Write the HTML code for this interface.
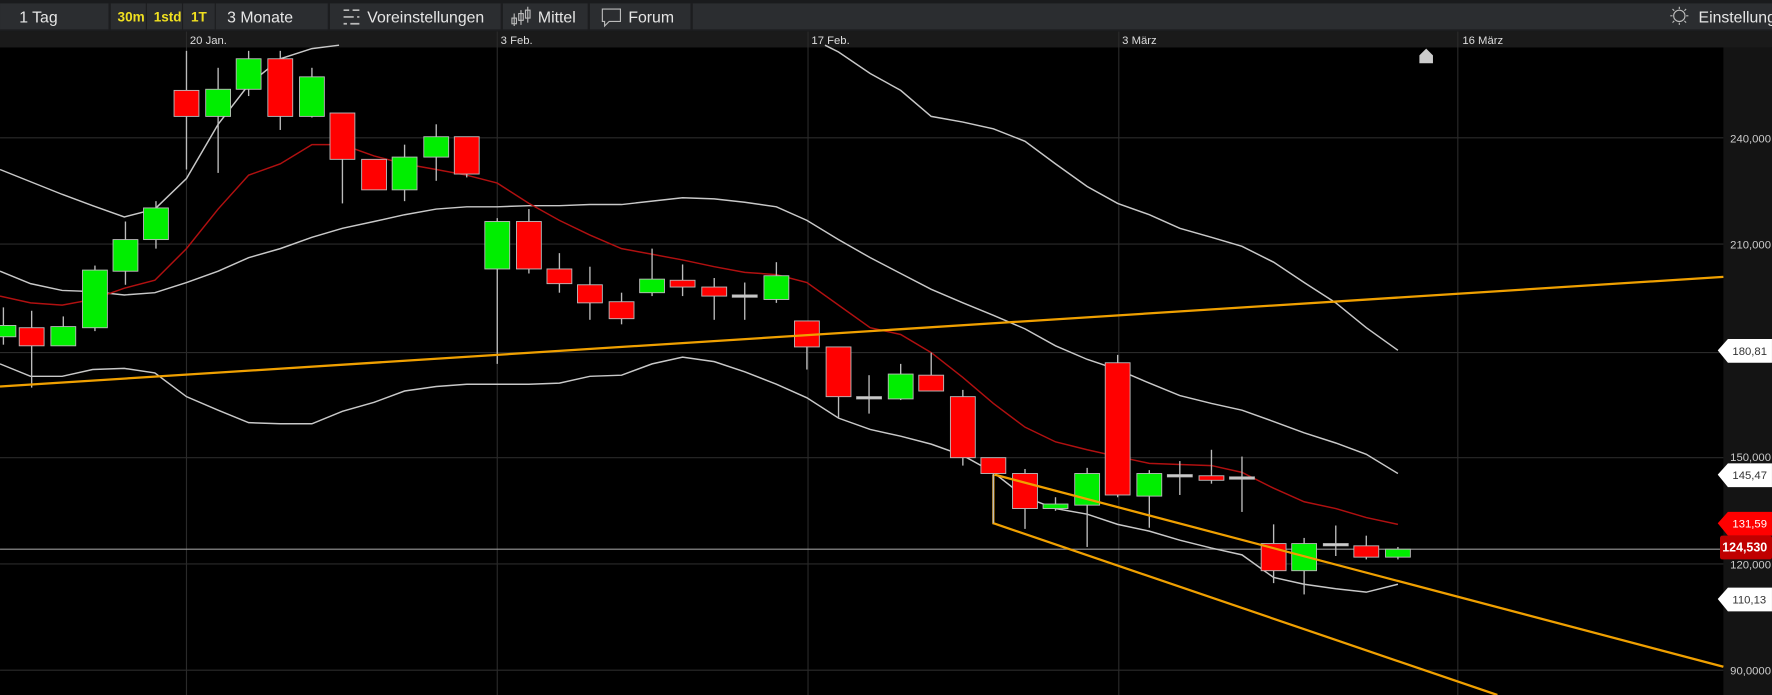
<!DOCTYPE html>
<html><head><meta charset="utf-8">
<style>
html,body{margin:0;padding:0;background:#000;overflow:hidden}
svg{display:block}
text{font-family:"Liberation Sans",sans-serif}
</style></head>
<body>
<svg id="s" width="1772" height="695" viewBox="0 0 1568 615" xmlns="http://www.w3.org/2000/svg">
<rect width="1568" height="615" fill="#000"/>
<rect x="0" y="0" width="1568" height="28" fill="#2b2d30"/>
<rect x="0" y="0" width="1568" height="3" fill="#1a1b1d"/>
<rect x="0" y="26" width="1568" height="2" fill="#1c1d1f"/>
<g fill="#1c1d1f">
<rect x="96" y="3" width="2" height="24"/><rect x="129" y="3" width="1" height="24"/><rect x="161" y="3" width="1" height="24"/>
<rect x="190" y="3" width="1" height="24"/><rect x="290" y="3" width="2" height="24"/><rect x="443" y="3" width="2" height="24"/>
<rect x="520" y="3" width="2" height="24"/><rect x="611" y="3" width="2" height="24"/>
</g>
<g font-size="14" fill="#e6e6e6">
<text x="17" y="20">1 Tag</text>
<text x="201" y="20">3 Monate</text>
<text x="325" y="20">Voreinstellungen</text>
<text x="476" y="20">Mittel</text>
<text x="556" y="20">Forum</text>
<text x="1503" y="20">Einstellung</text>
</g>
<g font-size="12" font-weight="bold" fill="#f0e020">
<text x="104" y="19">30m</text><text x="136" y="19">1std</text><text x="169" y="19">1T</text>
</g>
<g stroke="#bbb" stroke-width="1.5" fill="none">
<path d="M304 9h14M304 15h14M304 21h14"/>
</g>
<g fill="#2b2d30"><rect x="309" y="7" width="3" height="4"/><rect x="313" y="13" width="3" height="4"/><rect x="307" y="19" width="3" height="4"/></g>
<g stroke="#bbb" stroke-width="1" fill="none">
<path d="M455 12v11M461 9v13M467 6v14"/>
<rect x="453" y="16" width="4" height="5"/><rect x="459" y="12" width="4" height="6"/><rect x="465" y="9" width="4" height="7"/>
<path d="M533 8h16v11h-10l-4 4v-4h-2z"/>
<circle cx="1486" cy="14" r="5"/>
<path d="M1486 6v2M1486 20v2M1478 14h2M1492 14h2M1480 8l1.5 1.5M1490.5 18.5l1.5 1.5M1480 20l1.5-1.5M1490.5 9.5l1.5-1.5"/>
</g>
<rect x="0" y="28" width="1568" height="14" fill="#1a1a1a"/>
<g font-size="10" fill="#ddd">
<text x="168" y="39">20 Jan.</text><text x="443" y="39">3 Feb.</text><text x="718" y="39">17 Feb.</text><text x="993" y="39">3 März</text><text x="1294" y="39">16 März</text>
</g>
<rect x="1525" y="42" width="43" height="573" fill="#141414"/>
<g stroke="#2a2a2a" stroke-width="1">
<path d="M165 28v587M440 28v587M715 28v587M990 28v587M1290 28v587"/>
<path d="M0 122h1525M0 216h1525M0 312h1525M0 405h1525M0 499h1525M0 593h1525"/>
</g>
<g id="c"></g>
<g font-size="10" fill="#ccc">
<text x="1531" y="126">240,000</text><text x="1531" y="220">210,000</text><text x="1531" y="408">150,000</text><text x="1531" y="503">120,000</text><text x="1531" y="597">90,0000</text>
</g>
<g id="tags"></g>
<path d="M1256 56v-7l6-6 6 6v7z" fill="#ccc"/>
</svg>
<script>
var NS="http://www.w3.org/2000/svg",g=document.getElementById("c");
function el(t,a,p){var e=document.createElementNS(NS,t);for(var k in a)e.setAttribute(k,a[k]);(p||g).appendChild(e);return e;}
function pl(pts,col,w){el("polyline",{points:pts.map(function(p){return p.join(",")}).join(" "),fill:"none",stroke:col,"stroke-width":w||1.3});}
el("line",{x1:0,y1:486,x2:1525,y2:486,stroke:"#999","stroke-width":1});
pl([[0,150],[55,172],[82,182],[110,192],[137,185],[165,158],[193,110],[220,75],[248,52],[276,43],[300,40]],"#c8c8c8");
pl([[730,40],[742,46],[770,65],[797,80],[824,103],[852,108],[879,114],[907,125],[934,145],[962,165],[989,180],[1017,190],[1044,202],[1072,210],[1099,218],[1127,232],[1154,250],[1182,268],[1209,290],[1237,310]],"#c8c8c8");
pl([[0,240],[27,251],[55,257],[82,258],[110,261],[137,259],[165,250],[193,240],[220,228],[248,220],[276,210],[303,202],[331,196],[358,190],[386,185],[413,183],[440,183],[468,182],[495,182],[522,181],[550,181],[577,178],[604,175],[632,176],[659,179],[687,183],[714,195],[742,212],[770,228],[797,242],[824,256],[852,268],[879,279],[907,291],[934,306],[962,318],[989,327],[1017,339],[1044,350],[1072,357],[1099,363],[1127,373],[1154,383],[1182,392],[1209,402],[1237,419]],"#c8c8c8");
pl([[0,322],[27,333],[55,333],[82,327],[110,326],[137,330],[165,351],[193,363],[220,374],[248,375],[276,375],[303,364],[331,356],[358,346],[386,342],[413,340],[440,340],[468,340],[495,339],[522,333],[550,332],[577,322],[604,316],[632,320],[659,329],[687,340],[714,352],[742,370],[770,380],[797,386],[824,393],[852,403],[879,418],[907,440],[934,450],[962,455],[989,464],[1017,470],[1044,478],[1072,485],[1099,491],[1127,511],[1154,517],[1182,521],[1209,524],[1237,517]],"#c8c8c8");
pl([[0,262],[27,268],[55,270],[82,265],[110,255],[137,248],[165,220],[193,185],[220,155],[248,145],[276,128],[303,128],[331,138],[358,145],[386,150],[413,155],[440,162],[468,180],[495,195],[522,208],[550,220],[577,225],[604,230],[632,236],[659,241],[687,243],[714,250],[742,270],[770,290],[797,296],[824,312],[852,334],[879,357],[907,378],[934,391],[962,398],[989,404],[1017,410],[1044,411],[1072,412],[1099,418],[1127,432],[1154,444],[1182,450],[1209,458],[1237,464]],"#b01010");
var C=[[3,288,298,272,305,"g"],[28,290,306,275,343,"r"],[56,289,306,280,306,"g"],[84,239,290,235,293,"g"],[111,212,240,196,252,"g"],[138,184,212,178,220,"g"],[165,80,103,45,150,"r"],[193,79,103,60,153,"g"],[220,52,79,45,85,"g"],[248,52,103,45,115,"r"],[276,68,103,60,104,"g"],[303,100,141,100,180,"r"],[331,141,168,141,168,"r"],[358,139,168,128,178,"g"],[386,121,139,110,160,"g"],[413,121,154,121,157,"r"],[440,196,238,193,322,"g"],[468,196,238,185,242,"r"],[495,238,251,224,259,"r"],[522,252,268,236,283,"r"],[550,267,282,259,287,"r"],[577,247,259,220,262,"g"],[604,248,254,234,262,"r"],[632,254,262,246,283,"r"],[659,261,263,250,283,"d"],[687,244,265,232,268,"g"],[714,284,307,284,327,"r"],[742,307,351,307,370,"r"],[769,351,353,332,366,"d"],[797,331,353,322,354,"g"],[824,332,346,312,346,"r"],[852,351,405,345,412,"r"],[879,405,419,405,464,"r"],[907,419,450,415,468,"r"],[934,446,450,440,452,"g"],[962,419,447,414,484,"g"],[989,321,438,314,440,"r"],[1017,419,439,416,467,"g"],[1044,420,422,408,438,"d"],[1072,421,425,398,428,"r"],[1099,422,424,404,453,"d"],[1127,481,505,464,516,"r"],[1154,481,505,476,526,"g"],[1182,481,483,465,492,"d"],[1209,483,493,474,495,"r"],[1237,486,493,484,495,"g"]];
C.forEach(function(c){
 el("line",{x1:c[0],y1:c[3],x2:c[0],y2:c[4],stroke:"#bbb","stroke-width":1.2});
 var f=c[5]=="g"?"#00ee00":c[5]=="r"?"#ff0000":"#ccc";
 el("rect",{x:c[0]-11,y:c[1],width:22,height:Math.max(c[2]-c[1],2),fill:f,stroke:"#bbb","stroke-width":0.8});
});
el("line",{x1:0,y1:342,x2:1525,y2:245,stroke:"#f0a000","stroke-width":2});
el("line",{x1:880,y1:420,x2:1525,y2:590,stroke:"#f0a000","stroke-width":2});
el("path",{d:"M879 420V463L1325 615",fill:"none",stroke:"#f0a000","stroke-width":2});
el("line",{x1:879,y1:420,x2:879,y2:463,stroke:"#bbb","stroke-width":1.2});
var T=document.getElementById("tags");
[[310,"180,81","#fff","#333",false],[420,"145,47","#fff","#333",false],[463,"131,59","#ff0000","#fff",false],[484,"124,530","#c00000","#fff",true],[530,"110,13","#fff","#333",false]].forEach(function(t){
 if(t[4]) el("rect",{x:1522,y:t[0]-10,width:46,height:21,rx:2,fill:t[2]},T);
 else el("path",{d:"M1520 "+t[0]+"l9 -10h39v21h-39z",fill:t[2]},T);
 var tx=el("text",{x:t[4]?1524:1533,y:t[0]+4,"font-size":t[4]?11:10,fill:t[3],"font-weight":t[4]?"bold":"normal"},T);tx.textContent=t[1];
});
</script>
</body></html>
